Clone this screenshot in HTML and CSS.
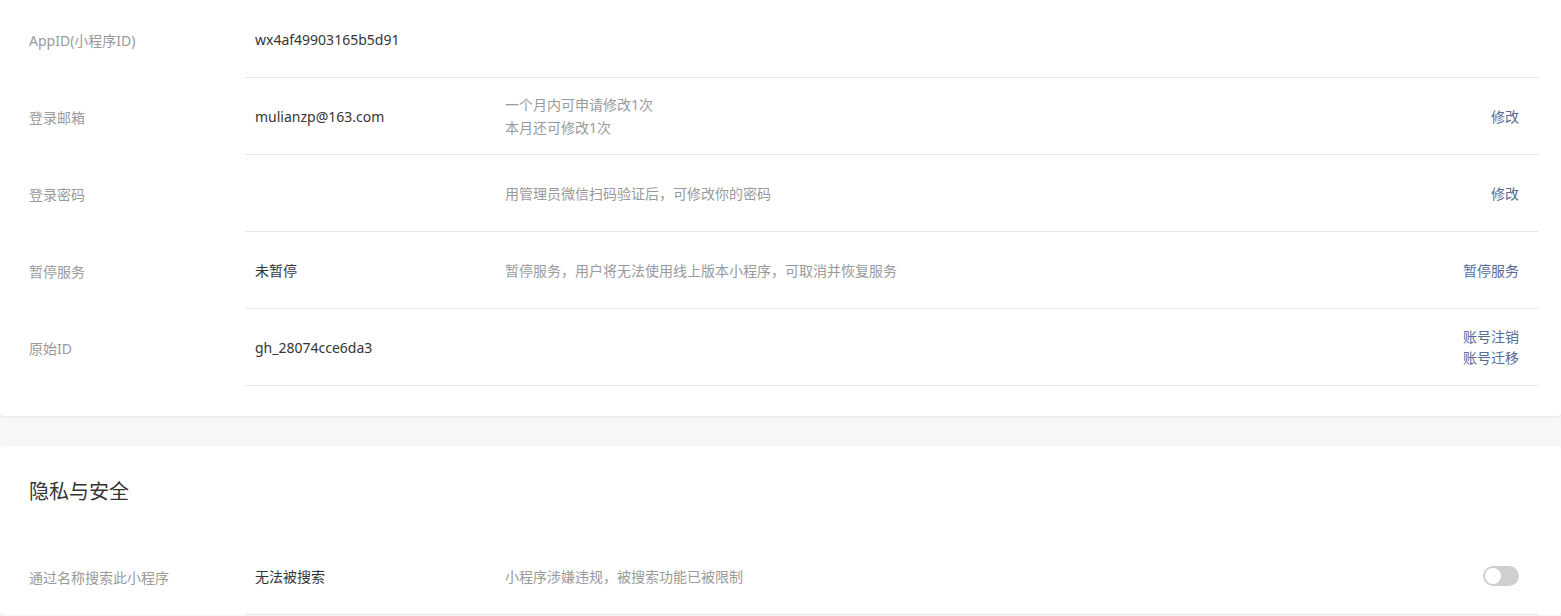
FILE: index.html
```html
<!DOCTYPE html>
<html lang="zh-CN">
<head>
<meta charset="utf-8">
<title>设置</title>
<link rel="stylesheet" href="styles.css">
</head>
<body>
<div class="page">
  <section class="card card-top">
    <div class="row">
      <div class="label">AppID(小程序ID)</div>
      <div class="content">
        <div class="value">wx4af49903165b5d91</div>
        <div class="hint"></div>
        <div class="action"></div>
      </div>
    </div>
    <div class="row">
      <div class="label">登录邮箱</div>
      <div class="content">
        <div class="value">mulianzp@163.com</div>
        <div class="hint"><div>一个月内可申请修改1次</div><div>本月还可修改1次</div></div>
        <div class="action"><a class="link">修改</a></div>
      </div>
    </div>
    <div class="row">
      <div class="label">登录密码</div>
      <div class="content">
        <div class="value"></div>
        <div class="hint">用管理员微信扫码验证后，可修改你的密码</div>
        <div class="action"><a class="link">修改</a></div>
      </div>
    </div>
    <div class="row">
      <div class="label">暂停服务</div>
      <div class="content">
        <div class="value">未暂停</div>
        <div class="hint">暂停服务，用户将无法使用线上版本小程序，可取消并恢复服务</div>
        <div class="action"><a class="link">暂停服务</a></div>
      </div>
    </div>
    <div class="row">
      <div class="label">原始ID</div>
      <div class="content">
        <div class="value">gh_28074cce6da3</div>
        <div class="hint"></div>
        <div class="action"><a class="link">账号注销</a><a class="link">账号迁移</a></div>
      </div>
    </div>
  </section>

  <section class="card card-bottom">
    <h2 class="title">隐私与安全</h2>
    <div class="row">
      <div class="label">通过名称搜索此小程序</div>
      <div class="content">
        <div class="value">无法被搜索</div>
        <div class="hint">小程序涉嫌违规，被搜索功能已被限制</div>
        <div class="action"><span class="switch"><span class="knob"></span></span></div>
      </div>
    </div>
  </section>
</div>
</body>
</html>
```

FILE: styles.css
```css
* { box-sizing: border-box; }
html, body {
  margin: 0;
  padding: 0;
}
body {
  background: #f6f7f9;
  font-family: "Noto Sans", "Noto Sans CJK SC", sans-serif;
  font-size: 14px;
  color: #353535;
}
.page {
  display: flex;
  flex-direction: column;
  gap: 30px;
}
.card {
  background: #fff;
  border-radius: 4px;
  box-shadow: 0 1px 2px rgba(0, 0, 0, 0.08);
  padding-right: 23px;
}
.card-top {
  padding-top: 1px;
  padding-bottom: 30px;
  border-top-left-radius: 0;
  border-top-right-radius: 0;
}
.card-bottom {
  padding-top: 32px;
}
.title {
  margin: 0 0 32px 29px;
  font-size: 20px;
  font-weight: 400;
  line-height: 28px;
  color: #353535;
}
.row {
  display: flex;
  height: 77px;
}
.label {
  width: 245px;
  padding-left: 29px;
  display: flex;
  align-items: center;
  color: #9a9a9a;
  flex-shrink: 0;
}
.content {
  flex: 1;
  display: flex;
  align-items: center;
  padding-left: 10px;
  padding-right: 19px;
  border-bottom: 1px solid #e7e7e7;
}
.value {
  width: 250px;
  flex-shrink: 0;
  color: #353535;
}
.hint {
  flex: 1;
  color: #9a9a9a;
  line-height: 23px;
}
.action {
  display: flex;
  flex-direction: column;
  align-items: flex-end;
  line-height: 21px;
}
.link {
  color: #576b95;
  cursor: pointer;
}
.switch {
  display: inline-block;
  position: relative;
  width: 36px;
  height: 20px;
  border-radius: 10px;
  background: #cfcfcf;
}
.knob {
  position: absolute;
  left: 2px;
  top: 2px;
  width: 16px;
  height: 16px;
  border-radius: 50%;
  background: #fff;
}
```
